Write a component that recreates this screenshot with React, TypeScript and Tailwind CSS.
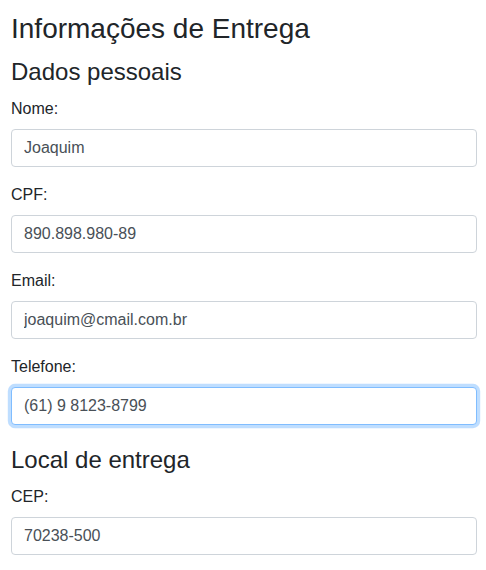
import React from "react";

const font = { fontFamily: '"Liberation Sans", Arial, sans-serif' };

function Field({ label, value, focused }: { label: string; value: string; focused?: boolean }) {
  return (
    <div className="mb-4">
      <label className="mb-2 block text-base leading-6 text-[#212529]">{label}</label>
      <input
        readOnly
        value={value}
        className={
          focused
            ? "block h-[38px] w-full rounded-[4px] border border-[#80bdff] bg-white px-3 py-1.5 text-base leading-6 text-[#495057] shadow-[0_0_0_3.2px_rgba(0,123,255,0.25)] outline-none"
            : "block h-[38px] w-full rounded-[4px] border border-[#ced4da] bg-white px-3 py-1.5 text-base leading-6 text-[#495057] outline-none"
        }
        style={font}
      />
    </div>
  );
}

export default function App() {
  return (
    <div className="min-h-[570px] bg-white pl-[11px] pr-[9px] pt-[12px] text-[#212529]" style={font}>
      <h3 className="mb-3 text-[28px] leading-[1.2] font-medium">Informações de Entrega</h3>
      <h4 className="mb-[11px] text-[24px] leading-[1.2] font-medium">Dados pessoais</h4>
      <Field label="Nome:" value="Joaquim" />
      <Field label="CPF:" value="890.898.980-89" />
      <Field label="Email:" value="joaquim@cmail.com.br" />
      <Field label="Telefone:" value="(61) 9 8123-8799" focused />
      <h4 className="pt-[5px] mb-[10px] text-[24px] leading-[1.2] font-medium">Local de entrega</h4>
      <Field label="CEP:" value="70238-500" />
    </div>
  );
}
